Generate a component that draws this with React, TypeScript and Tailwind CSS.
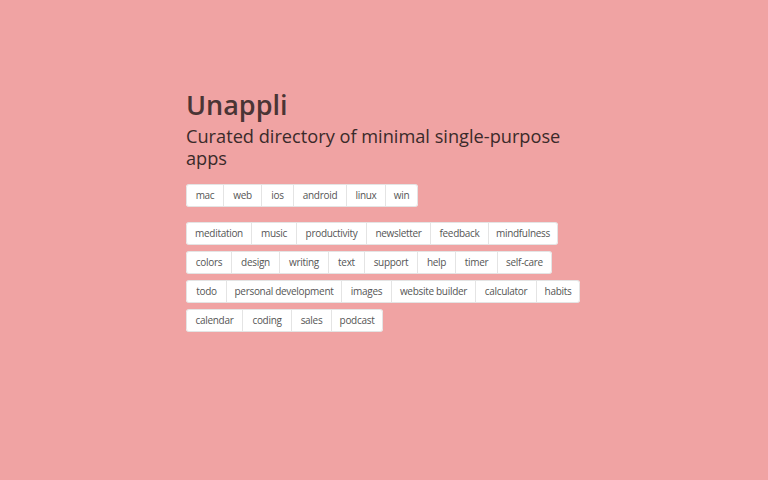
import React from "react";

type Tag = [string, number];

const platforms: Tag[] = [
  ["mac", 37], ["web", 38], ["ios", 32], ["android", 53], ["linux", 39], ["win", 33],
];
const rows: Tag[][] = [
  [["meditation", 65], ["music", 45], ["productivity", 70], ["newsletter", 64], ["feedback", 58], ["mindfulness", 70]],
  [["colors", 45], ["design", 48], ["writing", 49], ["text", 36], ["support", 53], ["help", 38], ["timer", 42], ["self-care", 55]],
  [["todo", 40], ["personal development", 115], ["images", 50], ["website builder", 84], ["calculator", 61], ["habits", 44]],
  [["calendar", 56], ["coding", 49], ["sales", 40], ["podcast", 52]],
];

function Group({ items }: { items: Tag[] }) {
  return (
    <div className="flex w-fit rounded-[3px] bg-white border-y border-[#e4e4e4]">
      {items.map(([t, w], i) => (
        <span
          key={t}
          style={{ width: w }}
          className={`h-[21px] flex items-center justify-center whitespace-nowrap text-[10px] tracking-[-0.3px] text-[#555] border-[#e4e4e4] ${i === 0 ? "border-l rounded-l-[3px]" : "border-l"} ${i === items.length - 1 ? "border-r rounded-r-[3px]" : ""}`}
        >
          {t}
        </span>
      ))}
    </div>
  );
}

export default function App() {
  return (
    <div
      className="w-[768px] h-[480px] bg-[#f0a3a3] overflow-hidden"
      style={{ fontFamily: '"Open Sans", "Noto Sans", sans-serif' }}
    >
      <div className="pl-[186px] pt-[87px] w-[600px]">
        <h1 className="text-[27px] leading-[36px] font-semibold text-[#4a3535]">Unappli</h1>
        <p className="mt-[2px] w-[400px] text-[18.2px] leading-[22px] text-[#3a2a2a]">
          Curated directory of minimal single-purpose apps
        </p>
        <div className="mt-[15px]">
          <Group items={platforms} />
        </div>
        <div className="mt-[15px] flex flex-col gap-[6px]">
          {rows.map((r, i) => (
            <Group key={i} items={r} />
          ))}
        </div>
      </div>
    </div>
  );
}
